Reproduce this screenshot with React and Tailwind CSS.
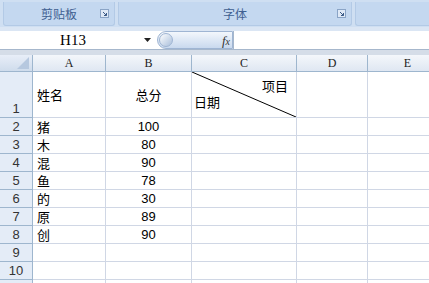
import React from "react";

const cols = [
  { w: 73, label: "A" },
  { w: 86, label: "B" },
  { w: 105, label: "C" },
  { w: 71, label: "D" },
  { w: 80, label: "E" },
];

const data = [
  ["猪", "100"],
  ["木", "80"],
  ["混", "90"],
  ["鱼", "78"],
  ["的", "30"],
  ["原", "89"],
  ["创", "90"],
  ["", ""],
  ["", ""],
  ["", ""],
];

const cjk = { fontFamily: '"Noto Sans CJK SC", sans-serif' };

function Launcher() {
  return (
    <svg width="9" height="9" viewBox="0 0 9 9">
      <rect x="0.5" y="0.5" width="8" height="8" fill="#dfe9f6" stroke="#8aa4c6" />
      <path d="M3 3 L6.5 6.5 M4 6.5 H6.5 V4" stroke="#3b5a86" fill="none" />
    </svg>
  );
}

export default function App() {
  return (
    <div className="w-[429px] h-[283px] overflow-hidden bg-white relative" style={cjk}>
      {/* Ribbon */}
      <div className="h-[27px] bg-[#cfdff2] flex gap-[3px] pl-[3px] pt-[2px]">
        <div className="w-[112px] h-[24px] rounded-b-[3px] border border-t-0 border-[#b3cae6] bg-[#c4d8f0] flex items-center justify-center relative">
          <span className="text-[12px] text-[#3f5f91] leading-none">剪贴板</span>
          <span className="absolute right-[5px] top-[7px] flex"><Launcher /></span>
        </div>
        <div className="w-[234px] h-[24px] rounded-b-[3px] border border-t-0 border-[#b3cae6] bg-[#c4d8f0] flex items-center justify-center relative">
          <span className="text-[12px] text-[#3f5f91] leading-none">字体</span>
          <span className="absolute right-[5px] top-[7px] flex"><Launcher /></span>
        </div>
        <div className="flex-1 h-[24px] rounded-bl-[3px] border border-t-0 border-r-0 border-[#b3cae6] bg-[#c4d8f0]" />
      </div>
      <div className="h-[4px] bg-[#dbe6f4]" />
      {/* Formula bar */}
      <div className="h-[19px] flex bg-white border-b border-[#a6b7cc]">
        <div className="w-[157px] flex items-center relative">
          <span className="flex-1 text-center text-[15px] leading-none pl-[2px] text-black" style={{ fontFamily: '"Liberation Serif", serif' }}>H13</span>
          <svg width="7" height="4" viewBox="0 0 7 4" className="mr-[6px]">
            <path d="M0 0 H7 L3.5 4 Z" fill="#222" />
          </svg>
        </div>
        <div className="w-[76px] h-[18px] rounded-l-[9px] bg-gradient-to-b from-[#f3f7fc] to-[#c9d9ee] border border-[#9fb5d3] flex items-center justify-end relative">
          <span className="absolute left-[1px] top-[1px] w-[14px] h-[14px] rounded-full bg-gradient-to-br from-white to-[#aabfdb] border border-[#9fb5d3]" />
          <span className="text-[13px] italic text-[#333] pr-[2px] leading-none" style={{ fontFamily: '"Liberation Serif", serif' }}>f<span className="text-[10px]">x</span></span>
        </div>
        <div className="flex-1 border-l border-[#a6b7cc]" />
      </div>
      <div className="h-[5px] bg-[#d5dde8]" />
      {/* Sheet */}
      <div className="flex flex-col">
        <div className="flex h-[17px]">
          <div className="w-[33px] shrink-0 bg-gradient-to-b from-[#e8eef8] to-[#cfdcec] border-r border-b border-[#9eb6ce] relative">
            <svg width="12" height="12" viewBox="0 0 12 12" className="absolute right-[3px] bottom-[2px]">
              <path d="M12 0 L12 12 L0 12 Z" fill="#b6c8df" />
            </svg>
          </div>
          {cols.map((c) => (
            <div
              key={c.label}
              style={{ width: c.w, fontFamily: '"Liberation Serif", serif' }}
              className="shrink-0 bg-gradient-to-b from-[#f4f7fb] to-[#dfe7f2] border-r border-b border-[#9eb6ce] flex items-center justify-center text-[12px] text-[#222] leading-none"
            >
              {c.label}
            </div>
          ))}
        </div>
        <div className="flex h-[46px]">
          <div className="w-[33px] shrink-0 bg-[#e4ecf7] border-r border-b border-[#9eb6ce] flex items-end justify-center pb-[2px] text-[13px] text-[#333] leading-none" style={{ fontFamily: '"Liberation Sans", sans-serif' }}>
            1
          </div>
          <div className="w-[73px] shrink-0 border-r border-b border-[#d0d7e5] flex items-center pl-[4px] text-[13px] text-black leading-none">
            姓名
          </div>
          <div className="w-[86px] shrink-0 border-r border-b border-[#d0d7e5] flex items-center justify-center text-[13px] text-black leading-none">
            总分
          </div>
          <div className="w-[105px] shrink-0 border-r border-b border-[#d0d7e5] relative text-[13px] text-black leading-none">
            <svg className="absolute inset-0" width="104" height="45" viewBox="0 0 104 45">
              <line x1="0" y1="0" x2="104" y2="45" stroke="#000" strokeWidth="1" />
            </svg>
            <span className="absolute right-[8px] top-[7px]">项目</span>
            <span className="absolute left-[2px] top-[23px]">日期</span>
          </div>
          <div className="w-[71px] shrink-0 border-r border-b border-[#d0d7e5]" />
          <div className="w-[80px] shrink-0 border-r border-b border-[#d0d7e5]" />
        </div>
        {data.map((r, i) => (
          <div key={i} className="flex h-[18px]">
            <div className="w-[33px] shrink-0 bg-[#e4ecf7] border-r border-b border-[#9eb6ce] flex items-center justify-center text-[13px] text-[#333] leading-none" style={{ fontFamily: '"Liberation Sans", sans-serif' }}>
              {i + 2}
            </div>
            <div className="w-[73px] shrink-0 border-r border-b border-[#d0d7e5] flex items-center pl-[4px] text-[13px] text-black leading-none">
              {r[0]}
            </div>
            <div className="w-[86px] shrink-0 border-r border-b border-[#d0d7e5] flex items-center justify-center text-[13px] text-black leading-none" style={{ fontFamily: '"Liberation Sans", sans-serif' }}>
              {r[1]}
            </div>
            <div className="w-[105px] shrink-0 border-r border-b border-[#d0d7e5]" />
            <div className="w-[71px] shrink-0 border-r border-b border-[#d0d7e5]" />
            <div className="w-[80px] shrink-0 border-r border-b border-[#d0d7e5]" />
          </div>
        ))}
      </div>
    </div>
  );
}
